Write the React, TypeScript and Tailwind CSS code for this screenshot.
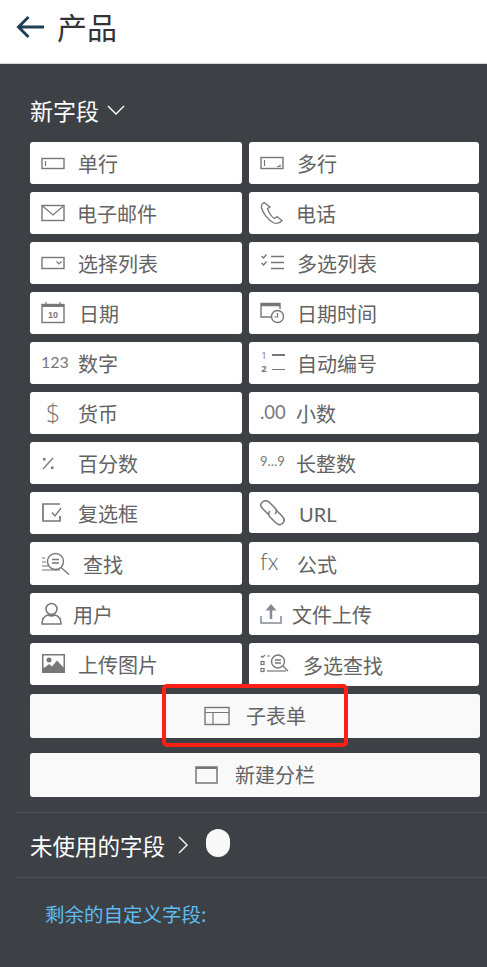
import type { ReactNode } from "react";

const s = { fill: "none", stroke: "#777", strokeWidth: 1.2 };

function Ico({ w = 26, h = 22, children }: { w?: number; h?: number; children: ReactNode }) {
  return (
    <svg width={w} height={h} viewBox={`0 0 ${w} ${h}`} className="block shrink-0">
      {children}
    </svg>
  );
}

const icons: Record<string, ReactNode> = {
  single: (
    <Ico>
      <rect x="1" y="6.500" width="22" height="10" {...s} strokeWidth={1.4} />
      <path d="M4.500 9v5" {...s} />
    </Ico>
  ),
  multi: (
    <Ico>
      <rect x="1" y="5.500" width="22" height="11" {...s} strokeWidth={1.4} />
      <path d="M4.500 8v6" {...s} />
      <path d="M17 14.500h3v-2" {...s} />
    </Ico>
  ),
  mail: (
    <Ico>
      <rect x="1" y="3.500" width="22" height="15" {...s} strokeWidth={1.4} />
      <path d="M1.500 4l10.500 9 10.500-9" {...s} />
    </Ico>
  ),
  phone: (
    <Ico h={24}>
      <path d="M4 1.500c-2 1-3 2.500-2.500 5 1 5 6.500 13 12.500 15.500 3 1 6 0 8-2.500l-5-4-2.500 2c-3-1.500-6-6.500-7-10l2.500-1.500z" {...s} strokeWidth={1.3} />
    </Ico>
  ),
  select: (
    <Ico>
      <rect x="1" y="5.500" width="22" height="11" {...s} strokeWidth={1.4} />
      <path d="M15.500 9.500l2.500 2.500 2.500-2.500" {...s} />
    </Ico>
  ),
  multiselect: (
    <Ico>
      <path d="M1.500 4l2 2 3-3.500M1.500 11l2 2 3-3.500" {...s} strokeWidth={1.4} />
      <path d="M11 4.500h13M11 10.500h13M11 16.500h13" {...s} strokeWidth={1.4} />
    </Ico>
  ),
  date: (
    <Ico h={24}>
      <rect x="1" y="3.500" width="22" height="18" {...s} strokeWidth={1.4} />
      <path d="M1 4.500h22" stroke="#777" strokeWidth={3} />
      <path d="M5 1v3M19 1v3" {...s} />
      <text x="12" y="17" textAnchor="middle" fontSize="9" fontWeight="700" fontFamily="Liberation Sans, sans-serif" fill="#777">10</text>
    </Ico>
  ),
  datetime: (
    <Ico>
      <path d="M11 15H1V1.500h19V7" {...s} strokeWidth={1.4} />
      <path d="M1 3h19" stroke="#777" strokeWidth={2.500} />
      <circle cx="17.500" cy="14.500" r="6" {...s} strokeWidth={1.4} />
      <path d="M17.500 11v4h-3" {...s} />
    </Ico>
  ),
  num: <span className="mb-[3px] text-[16px] leading-none text-[#777] [font-family:'Lato',sans-serif]">123</span>,
  auto: (
    <div className="mb-[2px] flex w-[26px] items-center gap-[4px] text-[#777] [font-family:'Open_Sans',sans-serif]">
      <div className="flex w-[8px] flex-col items-center">
        <span className="h-[13px] text-[9.5px] leading-[13px]">1</span>
        <span className="h-[13px] text-[9.5px] font-bold leading-[13px]">2</span>
      </div>
      <div className="flex h-[16px] flex-col justify-between">
        <div className="h-[1.5px] w-[13px] bg-[#777]" />
        <div className="h-[1.5px] w-[13px] bg-[#777]" />
      </div>
    </div>
  ),
  money: <span className="mb-[2px] pl-[5px] text-[25px] font-light leading-none text-[#777] [font-family:'Open_Sans',sans-serif]">$</span>,
  decimal: <span className="mb-[2px] text-[18.500px] leading-none text-[#777] [font-family:'Lato',sans-serif]">.00</span>,
  percent: (
    <Ico>
      <path d="M2 17L12 6" {...s} strokeWidth={1.3} />
      <rect x="2" y="6" width="2.500" height="2.500" fill="#777" />
      <rect x="10" y="14.500" width="2.500" height="2.500" fill="#777" />
    </Ico>
  ),
  long: <span className="mb-[4px] text-[13px] leading-none text-[#777] [font-family:'Lato',sans-serif]">9…9</span>,
  checkbox: (
    <Ico h={24}>
      <path d="M19 15v5H2V3h17" {...s} strokeWidth={1.7} />
      <path d="M11 11.500l3 3.500 6-8" {...s} strokeWidth={1.3} />
    </Ico>
  ),
  link: (
    <Ico h={26}>
      <path d="M9 15L3 9C0 6 0 4 2.500 2 5 0 7 0 9.500 2.500L15 8c2 2 2 4 0 6" {...s} strokeWidth={1.5} />
      <path d="M16 10l6 6c3 3 3 5 .5 7.500-2.500 2-4.500 1.500-7-1L10 17c-2-2-2-4 0-6" {...s} strokeWidth={1.5} />
    </Ico>
  ),
  lookup: (
    <Ico w={29} h={26}>
      <circle cx="14.500" cy="10.500" r="8" {...s} strokeWidth={1.4} />
      <path d="M11 8.500h7M11 12h7M20 16.500l8 7" {...s} strokeWidth={1.4} />
      <path d="M1 7h3M1 11h4M1 15h6M1 19h18" {...s} />
    </Ico>
  ),
  fx: <span className="mb-[5px] text-[23px] font-light leading-none text-[#666] [font-family:'Lato',sans-serif]">fx</span>,
  user: (
    <Ico h={24}>
      <circle cx="10.500" cy="7" r="5.500" {...s} strokeWidth={1.5} />
      <path d="M1 22c0-5 2-8 6-9 2 1 5 1 7 0 4 1 6 4 6 9z" {...s} strokeWidth={1.5} />
    </Ico>
  ),
  upload: (
    <Ico h={22}>
      <path d="M1 13v7h20v-7" {...s} strokeWidth={1.5} stroke="#848a94" />
      <path d="M11 16V4" fill="none" stroke="#848a94" strokeWidth={2.500} />
      <path d="M5.500 7.500L11 1l5.500 6.500z" fill="#848a94" />
    </Ico>
  ),
  image: (
    <Ico h={22}>
      <rect x="1" y="1" width="23" height="19" fill="#777" />
      <rect x="2.500" y="2.500" width="20" height="12" fill="#fff" />
      <circle cx="8" cy="7" r="2.500" fill="#777" />
      <path d="M2 16l6-5 3 2.500 5-6 7 7.500v5H2z" fill="#777" />
    </Ico>
  ),
  multilookup: (
    <Ico w={29} h={24}>
      <circle cx="18" cy="8.500" r="6.500" {...s} strokeWidth={1.4} />
      <path d="M15 7h6M15 10h6M23 13l5 5" {...s} strokeWidth={1.4} />
      <path d="M1 3l1.500 1.500L5 2M7 3h3" {...s} />
      <rect x="1" y="8.500" width="3" height="3" {...s} />
      <rect x="1" y="15.500" width="3" height="3" {...s} />
      <path d="M7 18h19" {...s} />
    </Ico>
  ),
  subform: (
    <Ico h={20}>
      <rect x="1" y="1.500" width="24" height="17" {...s} strokeWidth={1.4} />
      <path d="M1 6.500h24M9 6.500v12" {...s} />
    </Ico>
  ),
  section: (
    <Ico w={24} h={20}>
      <rect x="1" y="2" width="21" height="16" {...s} strokeWidth={1.5} />
      <path d="M1 3h21" stroke="#777" strokeWidth={2} />
    </Ico>
  ),
};

type Field = { label: string; icon: string; ml: string; h?: string; mb?: string; latin?: boolean };

const left: Field[] = [
  { label: "单行", icon: "single", ml: "left-[48px]" },
  { label: "电子邮件", icon: "mail", ml: "left-[47px]" },
  { label: "选择列表", icon: "select", ml: "left-[48px]" },
  { label: "日期", icon: "date", ml: "left-[49px]" },
  { label: "数字", icon: "num", ml: "left-[48px]" },
  { label: "货币", icon: "money", ml: "left-[48px]" },
  { label: "百分数", icon: "percent", ml: "left-[48px]" },
  { label: "复选框", icon: "checkbox", ml: "left-[48px]" },
  { label: "查找", icon: "lookup", ml: "left-[53px]", h: "h-[43px]" },
  { label: "用户", icon: "user", ml: "left-[43px]" },
  { label: "上传图片", icon: "image", ml: "left-[48px]" },
];

const right: Field[] = [
  { label: "多行", icon: "multi", ml: "left-[48px]" },
  { label: "电话", icon: "phone", ml: "left-[47px]" },
  { label: "多选列表", icon: "multiselect", ml: "left-[48px]" },
  { label: "日期时间", icon: "datetime", ml: "left-[48px]" },
  { label: "自动编号", icon: "auto", ml: "left-[48px]" },
  { label: "小数", icon: "decimal", ml: "left-[47px]" },
  { label: "长整数", icon: "long", ml: "left-[47px]" },
  { label: "URL", icon: "link", ml: "left-[50px]", h: "h-[41px]", mb: "mb-[1px]", latin: true },
  { label: "公式", icon: "fx", ml: "left-[48px]", h: "h-[43px]" },
  { label: "文件上传", icon: "upload", ml: "left-[43px]" },
  { label: "多选查找", icon: "multilookup", ml: "left-[54px]", h: "h-[43px]" },
];

function FieldButton({ field }: { field: Field }) {
  return (
    <div className={`relative flex items-center rounded-[3px] bg-white pl-[11px] ${field.h ?? "h-[42px]"} ${field.mb ?? ""}`}>
      {icons[field.icon]}
      <span className={`absolute top-[calc(50%+1px)] -translate-y-1/2 text-[20px] leading-none text-[#636363] ${field.ml} ${field.latin ? "[font-family:'Lato',sans-serif]" : ""}`}>
        {field.label}
      </span>
    </div>
  );
}

function WideButton({ label, icon }: { label: string; icon: string }) {
  return (
    <div className="flex h-[44px] items-center justify-center gap-[16px] rounded-[3px] bg-[#f9f9f9]">
      {icons[icon]}
      <span className="text-[20px] leading-none text-[#636363]">{label}</span>
    </div>
  );
}

export default function App() {
  return (
    <div className="flex h-[967px] w-[487px] flex-col overflow-hidden bg-[#3d4145] [font-family:'Noto_Sans_CJK_SC','Noto_Sans',sans-serif]">
      <header className="flex h-[64px] shrink-0 items-center gap-[12px] border-b border-[#d8d8d8] bg-white pl-[16px]">
        <svg width="29" height="26" viewBox="0 0 29 26" className="mb-[10px]">
          <path d="M28 13H3M12.500 3L2.500 13l10 10" fill="none" stroke="#1f3f57" strokeWidth="3" />
        </svg>
        <h1 className="mb-[12px] text-[30px] leading-none text-[#333]">产品</h1>
      </header>

      <div className="flex items-center gap-[8px] pl-[30px] pt-[31px]">
        <span className="text-[23px] leading-[30px] text-white">新字段</span>
        <svg width="18" height="11" viewBox="0 0 18 11"><path d="M1 1l8 8 8-8" fill="none" stroke="#fff" strokeWidth="1.400" /></svg>
      </div>

      <div className="grid grid-cols-[212px_230px] gap-x-[7px] pl-[30px] pt-[17px]">
        <div className="flex flex-col gap-[8px]">
          {left.map((field) => <FieldButton key={field.label} field={field} />)}
        </div>
        <div className="flex flex-col gap-[8px]">
          {right.map((field) => <FieldButton key={field.label} field={field} />)}
        </div>
      </div>

      <div className="relative ml-[30px] mt-[8px] flex w-[450px] flex-col gap-[15px]">
        <WideButton label="子表单" icon="subform" />
        <WideButton label="新建分栏" icon="section" />
        <div className="absolute left-[132px] top-[-10px] h-[63px] w-[186px] rounded-[5px] border-[4px] border-[#ff2015]" />
      </div>

      <div className="ml-[15px] mt-[15px] flex h-[66px] items-center border-y border-[#4e5256] pl-[15px]">
        <span className="text-[22.500px] leading-none text-white">未使用的字段</span>
        <svg width="12" height="18" viewBox="0 0 12 18" className="ml-[12px]"><path d="M2 1l8 8-8 8" fill="none" stroke="#eee" strokeWidth="1.500" /></svg>
        <span className="mb-[5px] ml-[17px] h-[28px] w-[24px] rounded-full bg-[#f8f8f8]" />
      </div>

      <p className="pl-[45px] pt-[26px] text-[19.500px] leading-none text-[#5dbcf2]">剩余的自定义字段:</p>
    </div>
  );
}
